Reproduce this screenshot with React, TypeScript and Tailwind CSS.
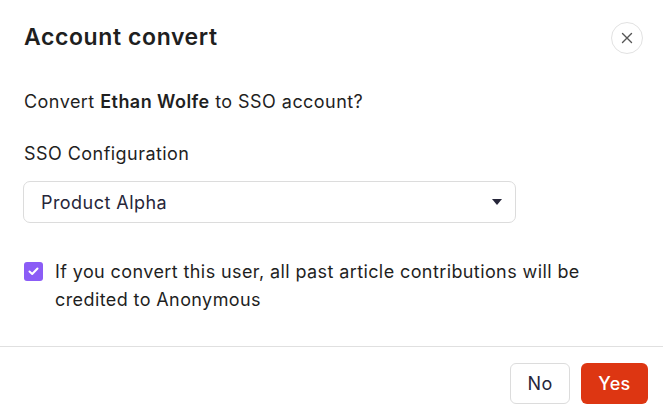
import React from "react";

export default function App() {
  return (
    <div className="w-[663px] h-[417px] bg-white flex flex-col text-[#1f1f1f]" style={{ fontFamily: "Inter, 'Noto Sans', sans-serif" }}>
      <div className="flex items-center justify-between pl-6 pr-5 pt-[22px] h-[54px]">
        <h1 className="text-[23px] font-semibold tracking-[0.6px] leading-none -mt-[2px]">Account convert</h1>
        <button className="w-8 h-8 rounded-full border border-[#e2e2e2] flex items-center justify-center text-[#555]">
          <svg width="12" height="12" viewBox="0 0 12 12" fill="none" stroke="currentColor" strokeWidth="1.4" strokeLinecap="round">
            <path d="M1.5 1.5 L10.5 10.5 M10.5 1.5 L1.5 10.5" />
          </svg>
        </button>
      </div>
      <div className="px-6 flex-1 flex flex-col tracking-[0.45px]">
        <p className="text-[18px] mt-[36px] leading-6">
          Convert <span className="font-semibold">Ethan Wolfe</span> to SSO account?
        </p>
        <p className="text-[18px] mt-[28px] leading-6">SSO Configuration</p>
        <div className="mt-[15px] w-[493px] h-[42px] -ml-px border border-[#dcdcdc] rounded-[7px] flex items-center justify-between pl-[17px] pr-[13px]">
          <span className="text-[18px] text-[#26263a]">Product Alpha</span>
          <svg width="10" height="6" viewBox="0 0 10 6"><path d="M0 0 H10 L5 6 Z" fill="#26263a" /></svg>
        </div>
        <div className="mt-[37px] flex gap-[12px]">
          <div className="w-[19px] h-[19px] mt-[2px] rounded-[3px] bg-[#8b5cf6] flex items-center justify-center shrink-0">
            <svg width="11" height="9" viewBox="0 0 11 9" fill="none" stroke="white" strokeWidth="2" strokeLinecap="round" strokeLinejoin="round">
              <path d="M1.5 4.5 L4.2 7 L9.5 1.5" />
            </svg>
          </div>
          <p className="text-[18px] leading-[28px] -mt-[2px] w-[560px] tracking-[0.4px]">
            If you convert this user, all past article contributions will be credited to Anonymous
          </p>
        </div>
      </div>
      <div className="border-t border-[#e0e0e0] h-[71px] flex items-start justify-end gap-[11px] pr-[15px] pt-[16px] tracking-[0.4px]">
        <button className="w-[60px] h-[41px] border border-[#dcdcdc] rounded-[6px] text-[18px] text-[#26263a] bg-white">No</button>
        <button className="w-[67px] h-[41px] rounded-[6px] text-[18px] text-white bg-[#dd3612] font-medium">Yes</button>
      </div>
    </div>
  );
}
